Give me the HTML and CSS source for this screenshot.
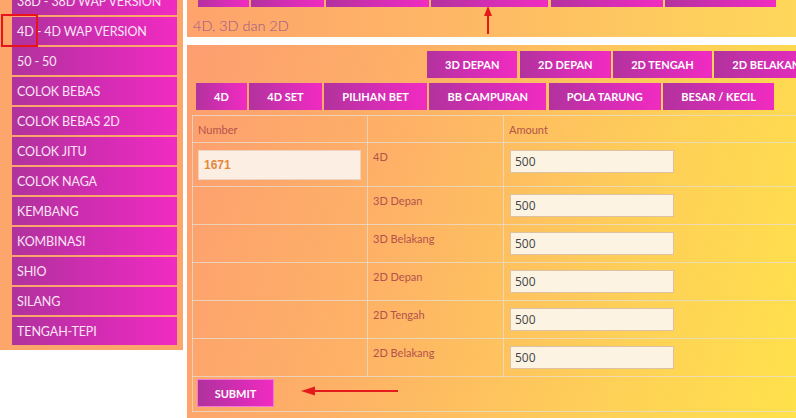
FILE: index.html
```html
<!DOCTYPE html>
<html lang="id">
<head>
<meta charset="utf-8">
<title>4D, 3D dan 2D</title>
<link rel="stylesheet" href="styles.css">
</head>
<body>
<div class="page">
  <aside class="sidebar">
    <ul class="menu">
      <li class="menu-item">38D - 38D WAP VERSION</li>
      <li class="menu-item">4D - 4D WAP VERSION</li>
      <li class="menu-item">50 - 50</li>
      <li class="menu-item">COLOK BEBAS</li>
      <li class="menu-item">COLOK BEBAS 2D</li>
      <li class="menu-item">COLOK JITU</li>
      <li class="menu-item">COLOK NAGA</li>
      <li class="menu-item">KEMBANG</li>
      <li class="menu-item">KOMBINASI</li>
      <li class="menu-item">SHIO</li>
      <li class="menu-item">SILANG</li>
      <li class="menu-item">TENGAH-TEPI</li>
    </ul>
  </aside>

  <main class="content">
    <section class="panel panel-top">
      <div class="tabs tabs-top">
        <span class="tab">4D</span>
        <span class="tab">4D SET</span>
        <span class="tab">PILIHAN BET</span>
        <span class="tab">BB CAMPURAN</span>
        <span class="tab">POLA TARUNG</span>
        <span class="tab">BESAR / KECIL</span>
      </div>
      <h2 class="title">4D, 3D dan 2D</h2>
    </section>

    <section class="panel panel-form">
      <div class="tabs tabs-row1">
        <span class="tab">3D DEPAN</span>
        <span class="tab">2D DEPAN</span>
        <span class="tab">2D TENGAH</span>
        <span class="tab">2D BELAKANG</span>
      </div>
      <div class="tabs tabs-row2">
        <span class="tab">4D</span>
        <span class="tab">4D SET</span>
        <span class="tab">PILIHAN BET</span>
        <span class="tab">BB CAMPURAN</span>
        <span class="tab">POLA TARUNG</span>
        <span class="tab">BESAR / KECIL</span>
      </div>

      <table class="bet-table">
        <colgroup>
          <col class="col-number">
          <col class="col-type">
          <col class="col-amount">
        </colgroup>
        <tr class="row-head">
          <td>Number</td>
          <td></td>
          <td>Amount</td>
        </tr>
        <tr class="row-first">
          <td><input class="input-number" type="text" value="1671"></td>
          <td>4D</td>
          <td><input class="input-amount" type="text" value="500"></td>
        </tr>
        <tr>
          <td></td>
          <td>3D Depan</td>
          <td><input class="input-amount" type="text" value="500"></td>
        </tr>
        <tr>
          <td></td>
          <td>3D Belakang</td>
          <td><input class="input-amount" type="text" value="500"></td>
        </tr>
        <tr>
          <td></td>
          <td>2D Depan</td>
          <td><input class="input-amount" type="text" value="500"></td>
        </tr>
        <tr>
          <td></td>
          <td>2D Tengah</td>
          <td><input class="input-amount" type="text" value="500"></td>
        </tr>
        <tr>
          <td></td>
          <td>2D Belakang</td>
          <td><input class="input-amount" type="text" value="500"></td>
        </tr>
        <tr class="row-submit">
          <td colspan="3"><button class="submit" type="button">SUBMIT</button></td>
        </tr>
      </table>
    </section>
  </main>

  <div class="mark-box"></div>
  <svg class="arrow-up" width="14" height="30" viewBox="0 0 14 30">
    <rect x="6" y="10" width="2" height="20" fill="#e51a1a"/>
    <polygon points="7,2 3,12 11,12" fill="#e51a1a"/>
  </svg>
  <svg class="arrow-left" width="100" height="12" viewBox="0 0 100 12">
    <rect x="10" y="5" width="88" height="2" fill="#e51a1a"/>
    <polygon points="1,6 15,1.5 15,10.5" fill="#e51a1a"/>
  </svg>
</div>
</body>
</html>
```

FILE: styles.css
```css
* {
  box-sizing: border-box;
}

html, body {
  margin: 0;
  padding: 0;
  background: #ffffff;
  overflow: hidden;
}

body {
  font-family: Lato, "Open Sans", "Liberation Sans", sans-serif;
  width: 796px;
  height: 418px;
}

.page {
  position: relative;
  display: flex;
  align-items: flex-start;
  gap: 4px;
  width: 796px;
  height: 418px;
}

/* Sidebar */
.sidebar {
  flex: 0 0 183px;
  margin-top: -18px;
  padding: 5px 6px 5px 12px;
  background: #fda66b;
}

.menu {
  list-style: none;
  margin: 0;
  padding: 0;
  display: flex;
  flex-direction: column;
  gap: 2px;
}

.menu-item {
  height: 28px;
  display: flex;
  align-items: center;
  padding-left: 5px;
  background: linear-gradient(to right, #b0329c 0%, #d42cb4 55%, #f12bc1 100%);
  color: #fbe4f4;
  font-size: 12.5px;
  letter-spacing: -0.1px;
  white-space: nowrap;
}

/* Content */
.content {
  flex: 1 1 auto;
  min-width: 0;
  margin-top: -26px;
  display: flex;
  flex-direction: column;
  gap: 8px;
}

.panel {
  overflow: hidden;
}

.panel-top {
  height: 63px;
  padding: 6px 0 0 11px;
  background: linear-gradient(to right, #fea36c 0%, #feb865 45%, #fed85a 100%);
}

.title {
  margin: 9px 0 0 -5px;
  font-size: 14.5px;
  line-height: 20px;
  font-weight: 300;
  color: #9c5589;
}

.panel-form {
  height: 400px;
  padding: 6px 0 0 5px;
  background: linear-gradient(105deg, #fd9e70 0%, #feb266 35%, #fecf58 70%, #ffe24b 100%);
}

.tabs {
  display: flex;
  gap: 2.6px;
  white-space: nowrap;
}

.tabs-row1 {
  padding-left: 235px;
}

.tabs-row2 {
  padding-left: 4px;
  margin-top: 5px;
}

.tab {
  flex: 0 0 auto;
  height: 27px;
  display: flex;
  align-items: center;
  padding: 0 18px;
  background: linear-gradient(to right, #b2329d 0%, #d62db5 55%, #f12bc1 100%);
  color: #ffffff;
  font-size: 11px;
  font-weight: 700;
}

/* Table */
.bet-table {
  margin-top: 5px;
  border-collapse: collapse;
  width: 711px;
  table-layout: fixed;
}

.col-number { width: 175px; }
.col-type { width: 136px; }
.col-amount { width: 400px; }

.bet-table td {
  border: 1px solid rgba(232, 222, 210, 0.75);
  padding: 7px 5px 7px 5px;
  vertical-align: top;
  font-size: 11px;
  line-height: 13px;
  color: #b4524a;
}

.row-head td {
  padding: 7px 5px 6px 5px;
}

.row-first td {
  padding-bottom: 6px;
}

.row-submit td {
  padding: 2px 4px 4px 4px;
}

.input-number {
  display: block;
  width: 163px;
  height: 30px;
  margin: 0;
  padding: 0 5px;
  border: 1px solid #edd2c0;
  background: #fdeee4;
  color: #e5883a;
  font-family: "Liberation Sans", Arial, sans-serif;
  font-weight: 700;
  font-size: 12px;
  outline: none;
}

.input-amount {
  display: block;
  width: 164px;
  height: 23px;
  margin: 0 0 0 1px;
  padding: 0 4px;
  border: 1px solid #dcc2a2;
  background: #fdf3e3;
  color: #444444;
  font-family: "Open Sans", "Liberation Sans", sans-serif;
  font-size: 12px;
  outline: none;
}

.submit {
  display: block;
  width: 77px;
  height: 28px;
  margin: 0;
  padding: 0;
  border: 1px solid #f07ad8;
  background: linear-gradient(to right, #b0329c 0%, #d22db3 55%, #f12bc1 100%);
  color: #ffffff;
  font-family: Lato, "Liberation Sans", sans-serif;
  font-size: 11px;
  font-weight: 700;
}

/* Annotations overlaid on the screenshot */
.mark-box {
  position: absolute;
  left: 1px;
  top: 14px;
  width: 37px;
  height: 33px;
  border: 2px solid #e8141a;
}

.arrow-up {
  position: absolute;
  left: 481px;
  top: 4px;
}

.arrow-left {
  position: absolute;
  left: 300px;
  top: 385px;
}
```
